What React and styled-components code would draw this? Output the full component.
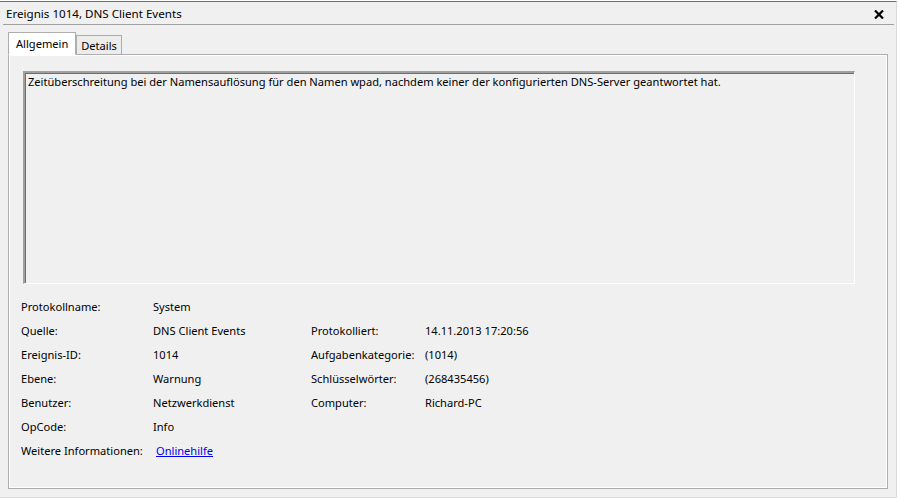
import React from 'react';
import styled, { createGlobalStyle } from 'styled-components';

const font = '"Noto Sans", "Open Sans", sans-serif';

const GlobalStyle = createGlobalStyle`
  html, body {
    margin: 0;
    padding: 0;
    background: #ffffff;
  }
  body {
    font-family: ${font};
    font-size: 11.1px;
    color: #000;
  }
`;

const Window = styled.div`
  width: 896px;
  height: 495px;
  margin-top: 1px;
  display: flex;
  flex-direction: column;
  background: #f0f0f0;
  border-top: 1px solid #6f6f6f;
  border-right: 1px solid #d9d9d9;
  border-bottom: 1px solid #d9d9d9;
`;

const TitleBar = styled.div`
  flex-shrink: 0;
  height: 22px;
  margin: 0 2px 0 3px;
  padding: 0 9px 0 3px;
  display: flex;
  align-items: center;
  justify-content: space-between;
  border-bottom: 1px solid #a0a0a0;
`;

const Title = styled.span`
  font-size: 11.6px;
  margin-top: 1px;
`;

const CloseButton = styled.button`
  border: none;
  background: none;
  padding: 0;
  width: 12px;
  height: 12px;
  margin-top: 2px;
  display: flex;
  align-items: center;
  justify-content: center;
  cursor: pointer;
`;

const Body = styled.div`
  flex: 1;
  min-height: 0;
  padding: 7px 8px 8px 8px;
  display: flex;
  flex-direction: column;
`;

const TabStrip = styled.div`
  flex-shrink: 0;
  height: 22px;
  display: flex;
  align-items: flex-end;
  position: relative;
  z-index: 1;
`;

const Tab = styled.div`
  height: ${({ active }) => (active ? '23px' : '20px')};
  padding: 0 ${({ active }) => (active ? '7px' : '4px')};
  padding-top: ${({ active }) => (active ? '0' : '1px')};
  display: flex;
  align-items: center;
  box-sizing: border-box;
  background: ${({ active }) => (active ? '#ffffff' : '#ececec')};
  border: 1px solid #adadad;
  border-bottom: ${({ active }) => (active ? '1px solid #ffffff' : '1px solid #adadad')};
  margin-bottom: -1px;
  margin-left: ${({ active }) => (active ? '0' : '0')};
`;

const TabPanel = styled.div`
  flex: 1;
  min-height: 0;
  border: 1px solid #adadad;
  box-shadow: inset -1px -1px 0 #ffffff, inset 1px 1px 0 #ffffff;
  padding: 16px 32px 20px 14px;
  display: flex;
  flex-direction: column;
`;

const MessageBox = styled.div`
  flex-shrink: 0;
  height: 208px;
  border-top: 2px solid #a0a0a0;
  border-left: 2px solid #a0a0a0;
  border-right: 1px solid #ffffff;
  border-bottom: 1px solid #ffffff;
  box-shadow: inset 1px 1px 0 #6d6d6d;
  padding: 1px 3px;
  line-height: 16px;
`;

const InfoGrid = styled.div`
  margin-top: 10px;
  margin-left: -2px;
  display: grid;
  grid-template-columns: 132px 158px 114px 1fr;
  grid-auto-rows: 24px;
  align-items: center;
`;

const Label = styled.span`
  white-space: nowrap;
`;

const Value = styled.span`
  white-space: nowrap;
`;

const HelpLink = styled.a`
  color: #0000ee;
  text-decoration: underline;
  margin-left: 3px;
  cursor: pointer;
`;

const rows = [
  ['Protokollname:', 'System', '', ''],
  ['Quelle:', 'DNS Client Events', 'Protokolliert:', '14.11.2013 17:20:56'],
  ['Ereignis-ID:', '1014', 'Aufgabenkategorie:', '(1014)'],
  ['Ebene:', 'Warnung', 'Schlüsselwörter:', '(268435456)'],
  ['Benutzer:', 'Netzwerkdienst', 'Computer:', 'Richard-PC'],
  ['OpCode:', 'Info', '', ''],
];

export default function App() {
  return (
    <>
      <GlobalStyle />
      <Window>
        <TitleBar>
          <Title>Ereignis 1014, DNS Client Events</Title>
          <CloseButton aria-label="Schließen">
            <svg width="10" height="9" viewBox="0 0 10 9">
              <path d="M1 0.5 L9 8.5 M9 0.5 L1 8.5" stroke="#000" strokeWidth="2.2" />
            </svg>
          </CloseButton>
        </TitleBar>
        <Body>
          <TabStrip>
            <Tab active>Allgemein</Tab>
            <Tab>Details</Tab>
          </TabStrip>
          <TabPanel>
            <MessageBox>
              Zeitüberschreitung bei der Namensauflösung für den Namen wpad, nachdem keiner der konfigurierten DNS-Server geantwortet hat.
            </MessageBox>
            <InfoGrid>
              {rows.map(([l1, v1, l2, v2]) => (
                <React.Fragment key={l1}>
                  <Label>{l1}</Label>
                  <Value>{v1}</Value>
                  <Label>{l2}</Label>
                  <Value>{v2}</Value>
                </React.Fragment>
              ))}
              <Label>Weitere Informationen:</Label>
              <Value>
                <HelpLink>Onlinehilfe</HelpLink>
              </Value>
            </InfoGrid>
          </TabPanel>
        </Body>
      </Window>
    </>
  );
}
